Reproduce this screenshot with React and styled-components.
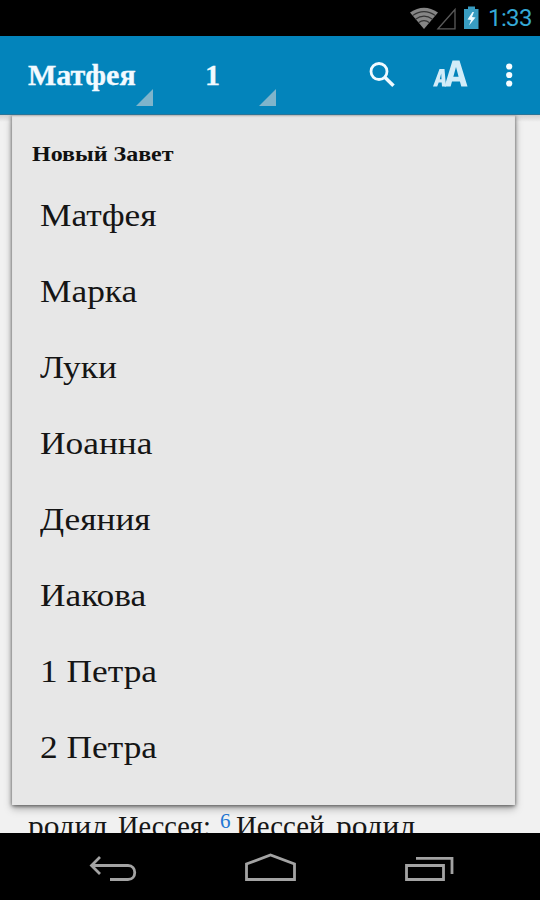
import React from "react";
import styled, { createGlobalStyle } from "styled-components";

const GlobalStyle = createGlobalStyle`
  * { box-sizing: border-box; }
  body { margin: 0; background: #000; }
`;

const Screen = styled.div`
  width: 540px;
  height: 900px;
  display: flex;
  flex-direction: column;
  overflow: hidden;
  background: #000;
  font-family: "Liberation Serif", serif;
`;

const StatusBar = styled.div`
  height: 36px;
  flex: none;
  display: flex;
  justify-content: flex-end;
  background: #000;
`;

const StatusIcons = styled.svg`
  width: 78px;
  height: 36px;
`;

const Clock = styled.div`
  width: 52px;
  font: 24px/37px Roboto, sans-serif;
  letter-spacing: -0.6px;
  color: #35a9d6;
  white-space: nowrap;
`;

const ActionBar = styled.header`
  height: 79px;
  flex: none;
  display: flex;
  background: #0384bb;
  border-bottom: 1px solid #2b7598;
`;

const Spinner = styled.div`
  width: ${(p) => p.$width}px;
  padding-left: ${(p) => p.$inset}px;
  display: flex;
  justify-content: space-between;
  align-items: flex-end;
  color: #f2faff;
  font-weight: bold;
  font-size: 29px;
  line-height: 78px;
`;

const SpinnerLabel = styled.span`
  width: 0;
  white-space: nowrap;
`;

const SpinnerLabelText = styled.span`
  display: inline-block;
  transform: scaleX(1.035);
  transform-origin: left;
  -webkit-text-stroke: 0.3px currentColor;
`;

const Corner = styled.svg`
  width: 17px;
  height: 17px;
  margin-bottom: 8px;
`;

const ActionIcons = styled.svg`
  width: 190px;
  height: 78px;
  margin-left: auto;
`;

const Reader = styled.main`
  position: relative;
  height: 718px;
  flex: none;
  display: flex;
  align-items: flex-end;
  overflow: hidden;
  background: linear-gradient(#d0d0d0, #f1f1f1 7px);
`;

const Verse = styled.div`
  display: flex;
  height: 25px;
  padding-left: 28px;
  color: #161616;
  font-size: 30px;
  line-height: 36px;
  white-space: nowrap;
`;

const Phrase = styled.span`
  width: ${(p) => p.$width}px;
  transform: scaleX(${(p) => p.$stretch});
  transform-origin: left;
`;

const VerseNumber = styled.span`
  width: 16px;
  color: #2377d4;
  font-size: 21px;
  line-height: 27px;
`;

const Dropdown = styled.section`
  position: absolute;
  top: 0;
  left: 12px;
  width: 503px;
  height: 690px;
  padding-top: 18px;
  background: #e7e7e7;
  box-shadow: 0 1px 4px rgba(0, 0, 0, 0.6), 0 4px 8px rgba(0, 0, 0, 0.25),
    inset 0 2px 2px -1px rgba(0, 0, 0, 0.25);
`;

const GroupTitle = styled.h2`
  margin: 0;
  height: 45px;
  padding-left: 20px;
  color: #111;
  font-size: 21.5px;
  line-height: 42px;
  transform: scaleX(1.115);
  transform-origin: 20px 0;
`;

const BookList = styled.ul`
  margin: 0;
  padding: 0 0 0 28px;
  list-style: none;
`;

const Book = styled.li`
  height: 76px;
  color: #151515;
  font-size: 32px;
  line-height: 75px;
  transform: scaleX(1.105);
  transform-origin: left;
`;

const NavBar = styled.nav`
  height: 67px;
  flex: none;
  background: #000;
`;

const NavIcons = styled.svg`
  display: block;
  width: 540px;
  height: 67px;
`;

const books = ["Матфея", "Марка", "Луки", "Иоанна", "Деяния", "Иакова", "1 Петра", "2 Петра"];

const SpinnerCorner = () => (
  <Corner viewBox="0 0 17 17">
    <path d="M17 0V17H0Z" fill="#7fb4cb" />
  </Corner>
);

export default function App() {
  return (
    <Screen>
      <GlobalStyle />
      <StatusBar>
        <StatusIcons viewBox="410 0 78 36">
          <path d="M410 12.5Q424 3 438 12.5L424 29Z" fill="#858585" />
          <g fill="none" stroke="#333" strokeWidth="1.1">
            <path d="M412.5 15.6Q424 7.6 435.5 15.6" />
            <path d="M415.5 19.2Q424 13 432.5 19.2" />
            <path d="M418.5 22.7Q424 18.5 429.5 22.7" />
          </g>
          <path d="M438 28.8L455 9.5V28.8Z" fill="none" stroke="#5a5a5a" strokeWidth="1.3" />
          <path d="M464 9H468V6.5H475V9H478.5V29H464Z" fill="#389cc1" />
          <path d="M472.5 12L467.5 19.5L471 20L469 25.5L475.5 17.5L472 17L474 12Z" fill="#edfaff" />
        </StatusIcons>
        <Clock>1:33</Clock>
      </StatusBar>
      <ActionBar>
        <Spinner $width={153} $inset={28}>
          <SpinnerLabel><SpinnerLabelText>Матфея</SpinnerLabelText></SpinnerLabel>
          <SpinnerCorner />
        </Spinner>
        <Spinner $width={123} $inset={52}>
          <SpinnerLabel><SpinnerLabelText>1</SpinnerLabelText></SpinnerLabel>
          <SpinnerCorner />
        </Spinner>
        <ActionIcons viewBox="350 36 190 78">
          <circle cx="379" cy="71.5" r="8" fill="none" stroke="#f0faff" strokeWidth="2.8" />
          <path d="M384.8 77.2L393.5 85.7" stroke="#f0faff" strokeWidth="3.5" />
          <g fill="#d2ecf8" fillRule="evenodd">
            <path d="M444.5 86.5L452.5 60.5H459.5L467.5 86.5H461.3L459.9 81.5H452L450.6 86.5ZM453.3 76.8H458.6L456 67Z" />
            <path d="M433 86.5L439.5 69H444.5L446 86.5H442L441.7 82.5H438.7L437.2 86.5ZM439.8 79.2H441.5L441.2 73.5Z" />
          </g>
          <g fill="#f8fdff">
            <circle cx="509.2" cy="66.5" r="3.1" />
            <circle cx="509.2" cy="75" r="3.1" />
            <circle cx="509.2" cy="83.5" r="3.1" />
          </g>
        </ActionIcons>
      </ActionBar>
      <Reader>
        <Verse>
          <Phrase $width={90} $stretch={1.05}>родил</Phrase>
          <Phrase $width={102} $stretch={0.945}>Иессея:</Phrase>
          <VerseNumber>6</VerseNumber>
          <Phrase $width={100} $stretch={0.96}>Иессей</Phrase>
          <Phrase $width={90} $stretch={1.05}>родил</Phrase>
        </Verse>
        <Dropdown>
          <GroupTitle>Новый Завет</GroupTitle>
          <BookList>
            {books.map((name) => (
              <Book key={name}>{name}</Book>
            ))}
          </BookList>
        </Dropdown>
      </Reader>
      <NavBar>
        <NavIcons viewBox="0 833 540 67" fill="none" stroke="#a3a3a3" strokeWidth="2.8">
          <path d="M100 857L91.5 865.5L100 874M92 865.5H128C137 865.5 137 879.5 128 879.5H110" />
          <path d="M246.5 879.5V864L270.5 855L294.5 864V879.5Z" />
          <path d="M406.5 865.5H443.5V879.5H406.5ZM416 858.3H452V874" />
        </NavIcons>
      </NavBar>
    </Screen>
  );
}
